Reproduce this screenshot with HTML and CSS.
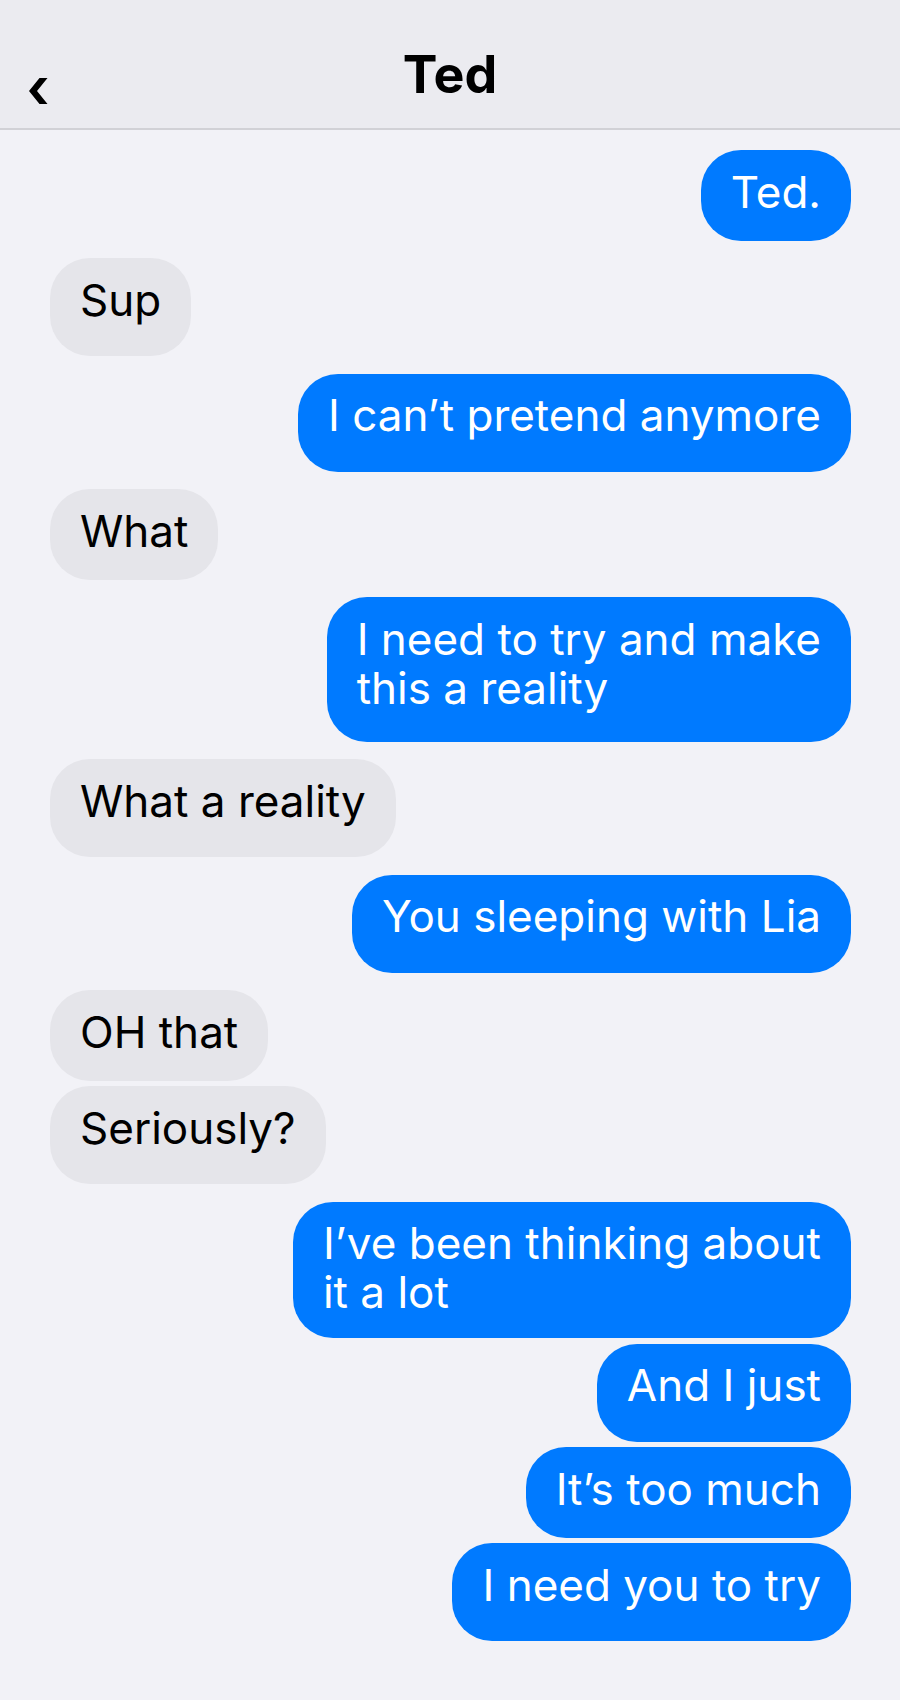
FILE: index.html
```html
<!DOCTYPE html>
<html lang="en">
<head>
    <meta charset="UTF-8">
    <meta name="viewport" content="width=device-width, initial-scale=1.0">
    <title>Ted</title>
    <link rel="stylesheet" href="styles.css">
</head>
<body>
    <header class="topbar">
        <a class="back" href="#" aria-label="Back">
            <svg width="19" height="27" viewBox="0 0 19 27">
                <polygon points="10.5,0 18.5,0 8,13 18.5,26 10.5,26 0,13" fill="#000"/>
            </svg>
        </a>
        <h1 class="title">Ted</h1>
        <span></span>
    </header>

    <main class="thread">
        <div class="msg sent">Ted.</div>
        <div class="msg recv deep">Sup</div>
        <div class="msg sent deep">I can’t pretend anymore</div>
        <div class="msg recv">What</div>
        <div class="msg sent deep two">I need to try and make<br>this a reality</div>
        <div class="msg recv deep">What a reality</div>
        <div class="msg sent deep">You sleeping with Lia</div>
        <div class="msg recv">OH that</div>
        <div class="msg recv deep">Seriously?</div>
        <div class="msg sent two">I’ve been thinking about<br>it a lot</div>
        <div class="msg sent deep">And I just</div>
        <div class="msg sent">It’s too much</div>
        <div class="msg sent deep">I need you to try</div>
    </main>
</body>
</html>
```

FILE: styles.css
```css
body {
    margin: 0;
    padding: 0;
    background-color: #f2f2f7;
    font-family: Inter, 'Noto Sans', sans-serif;
    color: #000;
}
.topbar {
    display: grid;
    grid-template-columns: 1fr auto 1fr;
    height: 83px;
    padding: 45px 0 0;
    background-color: #ebebf0;
    border-bottom: 2px solid #d1d1d6;
}
.back {
    align-self: start;
    justify-self: start;
    margin: 33px 0 0 29px;
    display: block;
    line-height: 0;
}
.title {
    margin: 0;
    font-size: 52px;
    line-height: 60px;
    font-weight: 700;
    text-align: center;
}
.thread {
    display: flex;
    flex-direction: column;
    padding: 20px 49px 40px 50px;
}
.msg {
    max-width: 520px;
    padding: 17.5px 30px 24px;
    border-radius: 40px;
    font-size: 44px;
    line-height: 49px;
}
.msg.deep {
    padding-bottom: 31.5px;
}
.msg.two {
    padding-bottom: 21px;
}
.msg.two.deep {
    padding-bottom: 29px;
}
.msg + .msg {
    margin-top: 17.5px;
}
.sent + .sent,
.recv + .recv {
    margin-top: 5.5px;
}
.sent {
    align-self: flex-end;
    background-color: #007aff;
    color: #fff;
}
.recv {
    align-self: flex-start;
    background-color: #e5e5ea;
    color: #000;
}
```
